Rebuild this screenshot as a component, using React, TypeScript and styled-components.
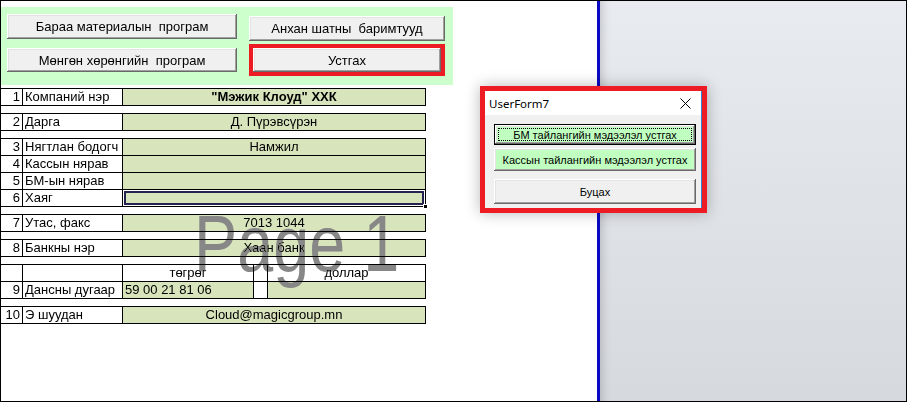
import styled, { createGlobalStyle } from 'styled-components';

const GlobalStyle = createGlobalStyle`
  html, body {
    margin: 0;
    padding: 0;
    background: #fff;
  }
  body {
    font-family: 'Liberation Sans', Arial, sans-serif;
    color: #000;
  }
`;

const Frame = styled.div`
  position: relative;
  width: 907px;
  height: 402px;
  box-sizing: border-box;
  border: 1px solid #000;
  display: flex;
  overflow: hidden;
`;

const Sheet = styled.div`
  flex: none;
  width: 596px;
  padding-top: 6px;
  display: flex;
  flex-direction: column;
  box-sizing: border-box;
  background: #fff;
`;

const PageEdge = styled.div`
  flex: none;
  width: 3px;
  background: #0a0ac4;
`;

const OutsideArea = styled.div`
  flex: 1;
  background: linear-gradient(180deg, #e8ebf0 0%, #d6d9de 100%);
  box-shadow: inset 10px 0 10px -8px rgba(0, 0, 0, 0.18);
`;

/* ---- top control panel ---- */

const Panel = styled.div`
  width: 452px;
  height: 78px;
  background: #ccffcc;
  display: flex;
  gap: 12px;
  padding-left: 6px;
  box-sizing: border-box;
`;

const PanelColumn = styled.div<{ $top: number; $gap: number; $width: number }>`
  display: flex;
  flex-direction: column;
  width: ${(p) => p.$width}px;
  padding-top: ${(p) => p.$top}px;
  gap: ${(p) => p.$gap}px;
`;

const SheetButton = styled.div<{ $h: number }>`
  height: ${(p) => p.$h}px;
  display: flex;
  align-items: center;
  justify-content: center;
  background: #f0f0f0;
  font-size: 13px;
  white-space: pre;
  box-shadow: inset -1px -1px #696969, inset 1px 1px #ffffff,
    inset -2px -2px #a0a0a0, inset 2px 2px #e3e3e3;
`;

const Highlight = styled.div`
  border: 4px solid #ed1c24;
  display: flex;
  flex-direction: column;
`;

/* ---- data table ---- */

const Table = styled.div`
  margin-top: 3px;
  width: 425px;
  display: flex;
  flex-direction: column;
  gap: 7px;
`;

const Block = styled.div`
  border-top: 1px solid #000;
  display: flex;
  flex-direction: column;
`;

const Row = styled.div<{ $split?: boolean }>`
  display: grid;
  grid-template-columns: ${(p) =>
    p.$split ? '22px 100px 131px 14px 158px' : '22px 100px 303px'};
  height: 17px;
  box-sizing: border-box;
  border-bottom: 1px solid #000;
  font-size: 13px;
  line-height: 16px;
`;

const Cell = styled.div<{
  $align?: 'left' | 'center' | 'right';
  $fill?: boolean;
  $bold?: boolean;
  $selected?: boolean;
}>`
  position: relative;
  border-right: 1px solid #000;
  padding: 0 2px;
  text-align: ${(p) => p.$align ?? 'left'};
  background: ${(p) => (p.$fill ? '#d8e4bc' : '#fff')};
  font-weight: ${(p) => (p.$bold ? 700 : 400)};
  white-space: nowrap;
  ${(p) =>
    p.$selected &&
    `box-shadow: inset 0 0 0 1px #fff, inset 0 0 0 3px #24224e;`}
`;

const FillHandle = styled.span`
  position: absolute;
  right: -3px;
  bottom: -3px;
  width: 5px;
  height: 5px;
  background: #000;
  border: 1px solid #fff;
  box-sizing: border-box;
`;

const Watermark = styled.div`
  position: absolute;
  left: 193px;
  top: 203px;
  font-size: 80px;
  line-height: 80px;
  color: #878787;
  transform: scaleX(0.81);
  transform-origin: left top;
  mix-blend-mode: darken;
  pointer-events: none;
  white-space: nowrap;
`;

/* ---- userform dialog ---- */

const Dialog = styled.div`
  position: absolute;
  left: 479px;
  top: 85px;
  width: 227px;
  height: 127px;
  box-sizing: border-box;
  border: 5px solid #ed1c24;
  box-shadow: 0 0 14px rgba(0, 0, 0, 0.28);
  display: flex;
`;

const DialogWindow = styled.div`
  flex: 1;
  display: flex;
  flex-direction: column;
  background: #f0f0f0;
  border-right: 1px solid #2b86d6;
`;

const TitleBar = styled.div`
  height: 24px;
  flex: none;
  background: #fff;
  display: flex;
  align-items: center;
  justify-content: space-between;
  padding: 0 10px 0 4px;
  font-family: 'Segoe UI', 'Noto Sans', 'Open Sans', sans-serif;
  font-size: 11.5px;
`;

const DialogBody = styled.div`
  display: flex;
  flex-direction: column;
  padding: 0 5px 0 9px;
`;

const FormButton = styled.div<{ $green?: boolean; $focused?: boolean; $h: number; $top: number }>`
  position: relative;
  height: ${(p) => p.$h}px;
  margin-top: ${(p) => p.$top}px;
  display: flex;
  align-items: center;
  justify-content: center;
  font-size: 11px;
  white-space: nowrap;
  background: ${(p) => (p.$green ? '#c0ffc0' : '#f0f0f0')};
  box-sizing: border-box;
  border: ${(p) => (p.$focused ? '1px solid #000' : 'none')};
  box-shadow: inset -1px -1px #696969, inset 1px 1px #ffffff,
    inset -2px -2px #a0a0a0, inset 2px 2px #e3e3e3;

  ${(p) =>
    p.$focused &&
    `&::after {
      content: '';
      position: absolute;
      inset: 3px;
      border: 1px dotted #000;
    }`}
`;

function CloseIcon() {
  return (
    <svg width="11" height="11" viewBox="0 0 11 11">
      <path d="M0.5 0.5 L10.5 10.5 M10.5 0.5 L0.5 10.5" stroke="#000" strokeWidth="1" />
    </svg>
  );
}

type Line = { n: string; label: string; value?: string; bold?: boolean; selected?: boolean };

const blocks: Line[][] = [
  [{ n: '1', label: 'Компаний нэр', value: '"Мэжик Клоуд" ХХК', bold: true }],
  [{ n: '2', label: 'Дарга', value: 'Д. Пүрэвсүрэн' }],
  [
    { n: '3', label: 'Нягтлан бодогч', value: 'Намжил' },
    { n: '4', label: 'Кассын нярав' },
    { n: '5', label: 'БМ-ын нярав' },
    { n: '6', label: 'Хаяг', selected: true },
  ],
  [{ n: '7', label: 'Утас, факс', value: '7013 1044' }],
  [{ n: '8', label: 'Банкны нэр', value: 'Хаан банк' }],
];

export default function App() {
  return (
    <>
      <GlobalStyle />
      <Frame>
        <Sheet>
          <Panel>
            <PanelColumn $top={7} $gap={9} $width={230}>
              <SheetButton $h={25}>Бараа материалын  програм</SheetButton>
              <SheetButton $h={24}>Мөнгөн хөрөнгийн  програм</SheetButton>
            </PanelColumn>
            <PanelColumn $top={9} $gap={3} $width={196}>
              <SheetButton $h={25}>Анхан шатны  баримтууд</SheetButton>
              <Highlight>
                <SheetButton $h={24}>Устгах</SheetButton>
              </Highlight>
            </PanelColumn>
          </Panel>

          <Table>
            {blocks.map((block, i) => (
              <Block key={i}>
                {block.map((line) => (
                  <Row key={line.n}>
                    <Cell $align="right">{line.n}</Cell>
                    <Cell>{line.label}</Cell>
                    <Cell $align="center" $fill $bold={line.bold} $selected={line.selected}>
                      {line.value}
                      {line.selected && <FillHandle />}
                    </Cell>
                  </Row>
                ))}
              </Block>
            ))}
            <Block>
              <Row $split>
                <Cell />
                <Cell />
                <Cell $align="center">төгрөг</Cell>
                <Cell />
                <Cell $align="center">доллар</Cell>
              </Row>
              <Row $split>
                <Cell $align="right">9</Cell>
                <Cell>Дансны дугаар</Cell>
                <Cell $fill>59 00 21 81 06</Cell>
                <Cell />
                <Cell $fill />
              </Row>
            </Block>
            <Block>
              <Row>
                <Cell $align="right">10</Cell>
                <Cell>Э шуудан</Cell>
                <Cell $align="center" $fill>Cloud@magicgroup.mn</Cell>
              </Row>
            </Block>
          </Table>
        </Sheet>
        <PageEdge />
        <OutsideArea />

        <Watermark>Page 1</Watermark>

        <Dialog>
          <DialogWindow>
            <TitleBar>
              <span>UserForm7</span>
              <CloseIcon />
            </TitleBar>
            <DialogBody>
              <FormButton $green $focused $h={21} $top={9}>
                БМ тайлангийн мэдээлэл устгах
              </FormButton>
              <FormButton $green $h={23} $top={3}>
                Кассын тайлангийн мэдээлэл устгах
              </FormButton>
              <FormButton $h={25} $top={8}>
                Буцах
              </FormButton>
            </DialogBody>
          </DialogWindow>
        </Dialog>
      </Frame>
    </>
  );
}
